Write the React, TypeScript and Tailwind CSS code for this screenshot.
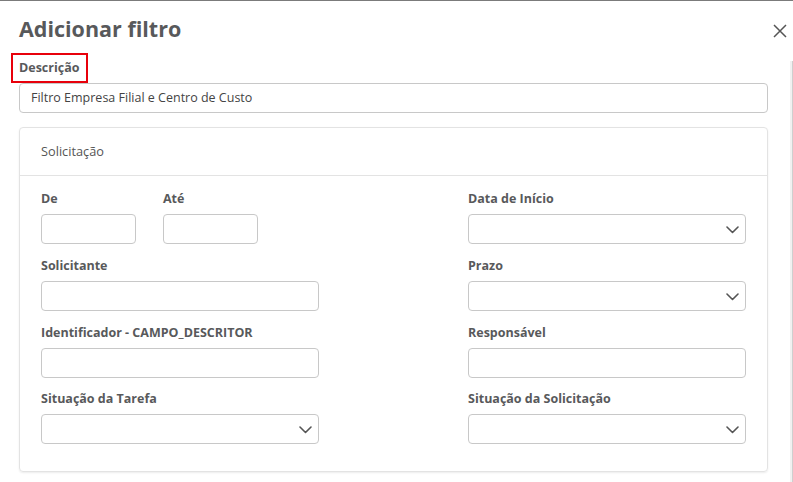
import React from "react";

function Chevron() {
  return (
    <svg width="13" height="8" viewBox="0 0 13 8" fill="none" className="absolute right-[6px] top-[11px]">
      <path d="M1 1 L6.5 6.5 L12 1" stroke="#555" strokeWidth="1.6" strokeLinecap="round" strokeLinejoin="round" />
    </svg>
  );
}

function Label({ children }: { children: React.ReactNode }) {
  return <div className="text-[12.5px] leading-[18px] font-bold text-[#58595b] mb-[6px]">{children}</div>;
}

function Input({ w = "w-[278px]" }: { w?: string }) {
  return <div className={`${w} h-[30px] border border-[#c8c8c8] rounded-[4px] bg-white`} />;
}

function Select() {
  return (
    <div className="relative w-[278px] h-[30px] border border-[#c8c8c8] rounded-[4px] bg-white">
      <Chevron />
    </div>
  );
}

export default function App() {
  return (
    <div className="relative w-[793px] h-[482px] bg-white border-t border-[#7b7b7b] overflow-hidden font-['Open_Sans',sans-serif] text-[#58595b]">
      <div className="flex items-center justify-between pl-[19px] pr-[6px] pt-[12px] h-[44px]">
        <h1 className="text-[21.5px] leading-[30px] font-bold text-[#58595b]">Adicionar filtro</h1>
        <svg width="14" height="14" viewBox="0 0 14 14" className="mt-[3px]">
          <path d="M1 1 L13 13 M13 1 L1 13" stroke="#555" strokeWidth="1.5" />
        </svg>
      </div>
      <div className="pl-[11px] mt-[8px]">
        <div className="inline-block border-2 border-[#e8000b] px-[6px] pt-[4px] pb-[4px]">
          <span className="block text-[12.5px] leading-[18px] font-bold text-[#58595b]">Descrição</span>
        </div>
      </div>
      <div className="ml-[19px] w-[749px] h-[30px] border border-[#c8c8c8] rounded-[4px] flex items-center px-[11px] text-[12.5px] text-[#444]">
        Filtro Empresa Filial e Centro de Custo
      </div>
      <div className="ml-[19px] mt-[14px] w-[749px] border border-[#e3e3e3] rounded-[4px] shadow-[0_1px_2px_rgba(0,0,0,0.08)]">
        <div className="h-[48px] border-b border-[#e3e3e3] flex items-center px-[21px] text-[12.75px] text-[#555]">Solicitação</div>
        <div className="px-[21px] pt-[14px] pb-[27px] flex justify-between">
          <div className="w-[278px] flex flex-col">
            <div className="flex gap-[27px]">
              <div>
                <Label>De</Label>
                <Input w="w-[95px]" />
              </div>
              <div>
                <Label>Até</Label>
                <Input w="w-[95px]" />
              </div>
            </div>
            <div className="mt-[13px]">
              <Label>Solicitante</Label>
              <Input />
            </div>
            <div className="mt-[13px]">
              <Label>Identificador - CAMPO_DESCRITOR</Label>
              <Input />
            </div>
            <div className="mt-[12px]">
              <Label>Situação da Tarefa</Label>
              <Select />
            </div>
          </div>
          <div className="w-[278px] flex flex-col">
            <div>
              <Label>Data de Início</Label>
              <Select />
            </div>
            <div className="mt-[13px]">
              <Label>Prazo</Label>
              <Select />
            </div>
            <div className="mt-[13px]">
              <Label>Responsável</Label>
              <Input />
            </div>
            <div className="mt-[12px]">
              <Label>Situação da Solicitação</Label>
              <Select />
            </div>
          </div>
        </div>
      </div>
      <div className="absolute right-0 top-[60px] bottom-0 w-[3px] bg-[#f1f1f1] border-r border-[#cfcfcf]" />
    </div>
  );
}
